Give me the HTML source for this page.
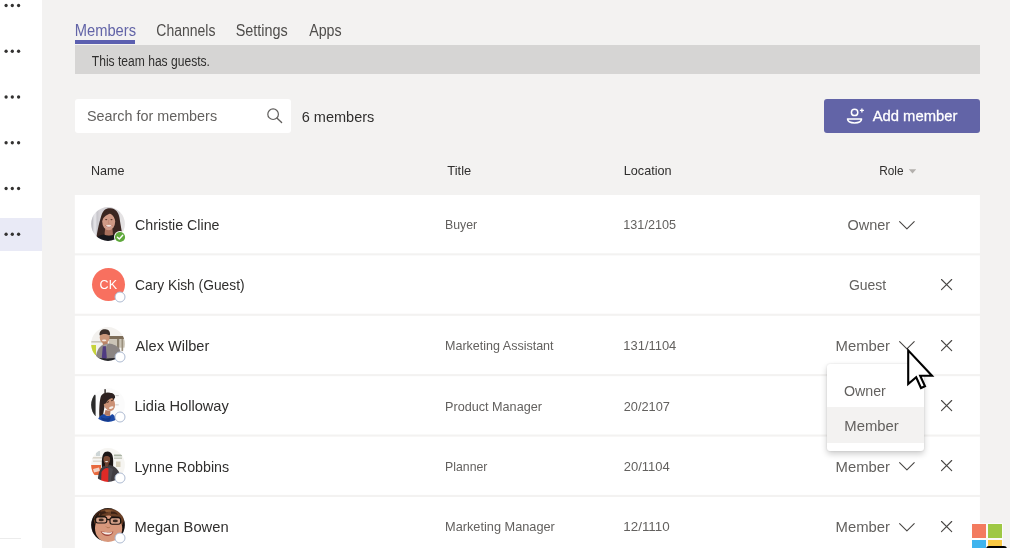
<!DOCTYPE html>
<html><head><meta charset="utf-8"><title>Members</title>
<style>
html,body{margin:0;padding:0}
body{width:1010px;height:548px;overflow:hidden;background:#f3f2f1;position:relative;font-family:"Liberation Sans",sans-serif}
#w{position:absolute;left:0;top:0;width:1010px;height:548px;opacity:.999}
.b{position:absolute}
.t{position:absolute;left:0;top:0;white-space:pre;line-height:1;transform-origin:0 0;display:block;filter:blur(.3px)}
svg{position:absolute;overflow:visible}
</style></head><body><div id="w">
<div class="b" style="left:0.00px;top:0.00px;width:41.60px;height:548.00px;background:#ffffff;"></div>
<div class="b" style="left:0.00px;top:218.00px;width:41.60px;height:32.80px;background:#e9eaf6;"></div>
<div class="b" style="left:0.00px;top:538.00px;width:20.70px;height:1.00px;background:#ececec;"></div>
<svg style="left:0;top:0" width="42" height="548" viewBox="0 0 42 548" fill="#333231"><circle cx="6.1" cy="5.50" r="1.65"/><circle cx="12.3" cy="5.50" r="1.65"/><circle cx="18.6" cy="5.50" r="1.65"/><circle cx="6.1" cy="51.25" r="1.65"/><circle cx="12.3" cy="51.25" r="1.65"/><circle cx="18.6" cy="51.25" r="1.65"/><circle cx="6.1" cy="97.00" r="1.65"/><circle cx="12.3" cy="97.00" r="1.65"/><circle cx="18.6" cy="97.00" r="1.65"/><circle cx="6.1" cy="142.75" r="1.65"/><circle cx="12.3" cy="142.75" r="1.65"/><circle cx="18.6" cy="142.75" r="1.65"/><circle cx="6.1" cy="188.50" r="1.65"/><circle cx="12.3" cy="188.50" r="1.65"/><circle cx="18.6" cy="188.50" r="1.65"/><circle cx="6.1" cy="234.25" r="1.65"/><circle cx="12.3" cy="234.25" r="1.65"/><circle cx="18.6" cy="234.25" r="1.65"/></svg>
<div class="b" style="left:75.20px;top:40.30px;width:60.30px;height:3.40px;background:#5b5fb0;"></div>
<div class="b" style="left:75.00px;top:44.80px;width:905.00px;height:29.30px;background:#d6d5d4;"></div>
<div class="b" style="left:75.20px;top:99.30px;width:215.90px;height:33.30px;background:#ffffff;border-radius:3px"></div>
<div class="b" style="left:824.40px;top:99.10px;width:155.40px;height:33.70px;background:#6264a7;border-radius:3px"></div>
<svg style="left:0;top:0" width="1010" height="548" viewBox="0 0 1010 548" fill="#fff"><rect x="74.8" y="195.00" width="905.1" height="58.3"/><rect x="74.8" y="255.40" width="905.1" height="58.3"/><rect x="74.8" y="315.80" width="905.1" height="58.3"/><rect x="74.8" y="376.20" width="905.1" height="58.3"/><rect x="74.8" y="436.60" width="905.1" height="58.3"/><rect x="74.8" y="497.00" width="905.1" height="58.3"/></svg>
<svg style="left:91.2px;top:206.80px" width="34" height="34" viewBox="0 0 34 34">
<defs><clipPath id="c0"><circle cx="17" cy="17" r="16.9"/></clipPath><filter id="f0" x="-10%" y="-10%" width="120%" height="120%"><feGaussianBlur stdDeviation="0.55"/></filter></defs>
<g clip-path="url(#c0)"><g filter="url(#f0)">
<rect x="-2" y="-2" width="38" height="38" fill="#d4d2d6"/>
<rect x="-2" y="-2" width="4.5" height="38" fill="#c2c1c7"/>
<rect x="2.5" y="-2" width="3" height="38" fill="#e2e1e5"/>
<rect x="5.5" y="-2" width="2" height="38" fill="#c9c8cd"/>
<rect x="29" y="-2" width="8" height="38" fill="#e4e2e3"/>
<path d="M5 36 C5.5 27 8 16 10.5 8 C12.5 2 16 1 19.5 1.2 C24.5 1.5 27.5 5 28.5 11 C29.5 18 31 24 31.5 30 L31.5 36 Z" fill="#3a2620"/>
<path d="M14 22 L21.5 22 L22 28.5 L13.5 28.5 Z" fill="#a86f5d"/>
<ellipse cx="17.7" cy="14.6" rx="6.5" ry="8.6" fill="#d09a86"/>
<path d="M11 13.5 C11 7 14 4.6 17.5 4.6 C21.5 4.6 24.5 7.5 24.5 13.8 C23.6 10.6 22 8 19 6.6 C16.5 7.6 12.8 9.6 11 13.5 Z" fill="#3a2620"/>
<ellipse cx="17.8" cy="19.2" rx="3" ry="1.25" fill="#f4ebe6"/>
<path d="M14.4 18.4 C16 20.8 19.6 20.8 21.2 18.4" stroke="#a6584d" stroke-width="0.7" fill="none"/>
<ellipse cx="15.2" cy="12.6" rx="1.1" ry="0.6" fill="#5a382e"/><ellipse cx="20.5" cy="12.6" rx="1.1" ry="0.6" fill="#5a382e"/>
<path d="M17.6 13 L17.2 16.4 L18.6 16.4" stroke="#b9806d" stroke-width="0.6" fill="none"/>
<path d="M3 36 C4 30 8 28.2 13 27.6 C16 29.4 20 29.4 23 27.6 C28 28.2 31 30.5 32 36 Z" fill="#18141a"/>
</g></g></svg>
<svg style="left:112.90px;top:229.50px" width="14" height="14" viewBox="0 0 14 14"><circle cx="7" cy="7" r="6.0" fill="#fff"/><circle cx="7" cy="7" r="5.1" fill="#5fa93c"/><path d="M4.4 7.2 L6.3 9 L9.7 5.3" fill="none" stroke="#fff" stroke-width="1.4" stroke-linecap="round" stroke-linejoin="round"/></svg>
<div class="b" style="left:91.7px;top:267.68px;width:33.4px;height:33.4px;border-radius:50%;background:#f8705f"></div>
<svg style="left:112.90px;top:289.78px" width="14" height="14" viewBox="0 0 14 14"><circle cx="7" cy="7" r="5.0" fill="#fff" stroke="#aebbd2" stroke-width="1.0"/></svg>
<svg style="left:91.2px;top:327.36px" width="34" height="34" viewBox="0 0 34 34">
<defs><clipPath id="c2"><circle cx="17" cy="17" r="16.9"/></clipPath><filter id="f2" x="-10%" y="-10%" width="120%" height="120%"><feGaussianBlur stdDeviation="0.55"/></filter></defs>
<g clip-path="url(#c2)"><g filter="url(#f2)">
<rect x="-2" y="-2" width="38" height="38" fill="#f3f1ee"/>
<rect x="18" y="9" width="16" height="3.2" fill="#7d6d58"/>
<rect x="18" y="12.2" width="16" height="8.5" fill="#cbc4b6"/>
<rect x="26" y="12" width="2.2" height="12" fill="#8a7f6d"/>
<rect x="30.5" y="12" width="1.6" height="12" fill="#9a8f7d"/>
<rect x="-1" y="14" width="12" height="1.6" fill="#c9c4b8"/>
<path d="M-1 18 H5 V28 H-1 Z" fill="#c6d23a"/>
<path d="M8.6 8 C8 3.5 11.5 1.8 14.5 2.2 C17.8 2.5 19.6 4.6 19 8.5 C17.5 6.5 11 6 8.6 8 Z" fill="#3a2e29"/>
<ellipse cx="13.6" cy="10.4" rx="4.9" ry="6.2" fill="#c99679"/>
<path d="M8.7 8.6 C9 4.5 12 3.6 14.3 3.8 C17 4 18.8 5.6 18.6 8.8 C16.5 6.6 11.5 6.3 8.7 8.6 Z" fill="#3a2e29"/>
<ellipse cx="13.2" cy="13.3" rx="2.2" ry="0.9" fill="#f3e8e0"/>
<path d="M11.5 15 L16.5 15 L17 19 L12 19.5 Z" fill="#b98468"/>
<path d="M4.5 36 C4.5 28 6 22 10.5 18.5 L13.5 17.5 L18 16.5 C22 16.8 27 19 29 23 C30 27 30 32 30 36 Z" fill="#8b8583"/>
<path d="M12 18 L16.8 17 L14.5 21 Z" fill="#a7a2a0"/>
<path d="M11.8 19.6 L14.8 19 L15.8 31 L12.6 33 L10.8 30.5 Z" fill="#4f3b82"/>
<path d="M4 30 C8 31.5 20 32.5 31 29.5 L31 36 L4 36 Z" fill="#26252b"/>
</g></g></svg>
<svg style="left:112.90px;top:350.06px" width="14" height="14" viewBox="0 0 14 14"><circle cx="7" cy="7" r="5.0" fill="#fff" stroke="#aebbd2" stroke-width="1.0"/></svg>
<svg style="left:91.2px;top:387.64px" width="34" height="34" viewBox="0 0 34 34">
<defs><clipPath id="c3"><circle cx="17" cy="17" r="16.9"/></clipPath><filter id="f3" x="-10%" y="-10%" width="120%" height="120%"><feGaussianBlur stdDeviation="0.55"/></filter></defs>
<g clip-path="url(#c3)"><g filter="url(#f3)">
<rect x="-2" y="-2" width="38" height="38" fill="#fbfbfb"/>
<path d="M0 6 C2 6 4.6 6 4.6 8 L4.6 28 C3 28 0 27 0 27 Z" fill="#2a2b2c"/>
<rect x="13.4" y="1.2" width="1.4" height="4" fill="#2b2522"/>
<path d="M8.4 29 C8 22 8.5 12 10 8 C12 4.5 17.5 3.8 21 5.5 C23.5 7 24 10 23 12 L14 16 C13 21 12.5 25 11.5 29.5 Z" fill="#2e2420"/>
<path d="M14.5 22 L19.5 23 L19 28 L13 27.5 Z" fill="#b87c62"/>
<ellipse cx="18.3" cy="15.6" rx="5.6" ry="7.5" transform="rotate(-18 18.3 15.6)" fill="#cb9175"/>
<path d="M11.8 16.5 C11 9 15 4.6 20 5 C23 5.4 24.6 7.6 24 10.2 C21 9.4 17 10.8 14.6 15.4 Z" fill="#2e2420"/><path d="M15.6 14.6 L18 13.6 M20.2 12.8 L22.4 11.8" stroke="#3a2720" stroke-width="0.9"/>
<ellipse cx="20.3" cy="19.6" rx="2.3" ry="1.1" transform="rotate(-20 20.3 19.6)" fill="#f5ede8"/>
<rect x="24.5" y="7.2" width="3.2" height="0.9" fill="#c9c7c5"/><rect x="24.5" y="16.4" width="3.2" height="0.9" fill="#c9c7c5"/>
<path d="M6 36 C6.5 30 9 27 13 26 C15 28.5 19 29 21 26 C24 27 25 30 25.5 36 Z" fill="#1f4aa5"/>
<path d="M10 29 C13 31 17 31 20 28.5 L19 33 L11 33.5 Z" fill="#163b8c"/>
</g></g></svg>
<svg style="left:112.90px;top:410.34px" width="14" height="14" viewBox="0 0 14 14"><circle cx="7" cy="7" r="5.0" fill="#fff" stroke="#aebbd2" stroke-width="1.0"/></svg>
<svg style="left:91.2px;top:447.92px" width="34" height="34" viewBox="0 0 34 34">
<defs><clipPath id="c4"><circle cx="17" cy="17" r="16.9"/></clipPath><filter id="f4" x="-10%" y="-10%" width="120%" height="120%"><feGaussianBlur stdDeviation="0.55"/></filter></defs>
<g clip-path="url(#c4)"><g filter="url(#f4)">
<rect x="-2" y="-2" width="38" height="38" fill="#f6f5f2"/>
<rect x="1" y="9" width="10" height="1.6" fill="#d9d5ca"/><rect x="2" y="12.5" width="9" height="1.4" fill="#dedad0"/>
<rect x="5" y="3" width="4" height="5" fill="#cdd5d6"/>
<rect x="23" y="6.5" width="8" height="1.8" fill="#a9b3a3"/><rect x="23" y="9.5" width="8" height="1.3" fill="#bcc3b5"/>
<rect x="25" y="13.5" width="4.5" height="5.5" fill="#d8d1be"/>
<path d="M-1 17 H10 V27 H-1 Z" fill="#e8693c"/>
<path d="M2 21 L8 19.5 L9 23 L3 24.5 Z" fill="#f3d2c4"/>
<path d="M11 20 C10.5 12 11 6 14 4 C17 2.5 20.5 4 21.5 7.5 C22.5 11 22.2 16 22 20 Z" fill="#1d1716"/>
<ellipse cx="15.8" cy="11.2" rx="3.3" ry="4.7" fill="#7b4b36"/>
<path d="M12.4 9.5 C12.6 6 15 4.8 17 5.2 C19 5.6 19.6 7.5 19.4 9.6 C17.5 7.6 14.5 7.4 12.4 9.5 Z" fill="#1d1716"/>
<ellipse cx="15.6" cy="13.6" rx="1.6" ry="0.7" fill="#eadfd8"/>
<rect x="14" y="15" width="3.6" height="4" fill="#6e4331"/>
<path d="M6.5 36 C7 27 8 21 13 17.5 L15.5 19.5 L18.5 17 C24 18 28 22 29 27 L29.5 36 Z" fill="#3f3d42"/>
<path d="M10 36 L10.5 24 C12 21.5 13.5 20.5 15.5 20 L18.5 20.5 L18 36 Z" fill="#df2a25"/>
<path d="M17.5 19 L22 21 L19 36 L17.2 36 Z" fill="#4d4b51"/>
</g></g></svg>
<svg style="left:112.90px;top:470.62px" width="14" height="14" viewBox="0 0 14 14"><circle cx="7" cy="7" r="5.0" fill="#fff" stroke="#aebbd2" stroke-width="1.0"/></svg>
<svg style="left:91.2px;top:508.20px" width="34" height="34" viewBox="0 0 34 34">
<defs><clipPath id="c5"><circle cx="17" cy="17" r="16.9"/></clipPath><filter id="f5" x="-10%" y="-10%" width="120%" height="120%"><feGaussianBlur stdDeviation="0.55"/></filter></defs>
<g clip-path="url(#c5)"><g filter="url(#f5)">
<rect x="-2" y="-2" width="38" height="38" fill="#15100e"/>
<ellipse cx="17.8" cy="12" rx="15" ry="11.5" fill="#5a3520"/>
<ellipse cx="17.6" cy="20.5" rx="13.6" ry="14.2" fill="#d8987c"/>
<path d="M3 14 C3 5 10 1 18 1.2 C26 1.4 32 5 32.5 14 C29 10.5 26 8.5 22 9.5 C19 6.5 14 7.5 12 9.5 C8 9 5 11 3 14 Z" fill="#6b3f25"/>
<path d="M9 4 C12 2.5 15 3 17 5 C14 5 11 6 9 8 Z" fill="#3b2216"/><path d="M3 12 C4 7 7 4 10 3 C8 6 6 9 5.5 13 Z" fill="#2a170f"/><path d="M14 2 C17 1.5 21 2 23 3.5 C20 3.5 17 3.8 15 4.6 Z" fill="#8b5a36"/><path d="M20 3.5 C23 3 26 4.5 27 7 C25 6 22 5.5 20 6 Z" fill="#3b2216"/>
<rect x="4.6" y="8.8" width="11.2" height="6.2" rx="2.2" fill="#d3a088" stroke="#1a1210" stroke-width="1.15"/>
<rect x="19" y="9.6" width="10.6" height="6.6" rx="2.2" fill="#d3a088" stroke="#1a1210" stroke-width="1.15"/>
<path d="M15.8 11.4 L19 11.8" stroke="#1a1210" stroke-width="1.4"/>
<ellipse cx="10.2" cy="11.9" rx="2.6" ry="1.3" fill="#3d2a20"/><ellipse cx="24.3" cy="12.9" rx="2.6" ry="1.3" fill="#3d2a20"/><path d="M6.5 8.2 L14.5 8.4 M20 9 L28.5 9.4" stroke="#1a1210" stroke-width="1.3"/>
<path d="M15 18.5 C15.8 20 18.2 20.2 19.2 18.8" stroke="#b37855" stroke-width="1" fill="none"/>
<path d="M9.6 23 C12 24.2 19 24.6 22.4 23.4 C21.5 27 18 28.2 15.8 28 C13 27.8 10.4 26 9.6 23 Z" fill="#a2493b"/>
<path d="M10.6 23.6 C13 24.6 18.5 24.9 21.4 23.9 C20.8 25.8 18.6 26.6 16 26.5 C13.4 26.4 11.4 25.4 10.6 23.6 Z" fill="#f7efe9"/>
<path d="M0 14 C1.5 22 3 28 7 32 L0 36 Z" fill="#15100e"/><path d="M34 13 C33 22 31.5 27 28 31.5 L34 36 Z" fill="#15100e"/>
</g></g></svg>
<svg style="left:112.90px;top:530.90px" width="14" height="14" viewBox="0 0 14 14"><circle cx="7" cy="7" r="5.0" fill="#fff" stroke="#aebbd2" stroke-width="1.0"/></svg>
<svg style="left:266px;top:107px" width="18" height="18" viewBox="0 0 18 18"><circle cx="7.1" cy="7.2" r="5.3" fill="none" stroke="#605e5c" stroke-width="1.2"/><path d="M10.9 11.1 L15.6 15.6" stroke="#605e5c" stroke-width="1.35" stroke-linecap="round"/></svg>
<svg style="left:845px;top:106px" width="22" height="20" viewBox="0 0 22 20"><circle cx="9.6" cy="6.4" r="3.2" fill="none" stroke="#fff" stroke-width="1.5"/><path d="M2.5 12.9 H16.6 C16.4 15.6 13.6 16.9 9.55 16.9 C5.5 16.9 2.7 15.6 2.5 12.9 Z" fill="none" stroke="#fff" stroke-width="1.5" stroke-linejoin="round"/><path d="M16.9 2.4 V6.4 M14.9 4.4 H18.9" stroke="#fff" stroke-width="1.3"/></svg>
<svg style="left:908px;top:168px" width="10" height="8" viewBox="0 0 10 8"><path d="M0.8 1.2 H8.2 L4.5 5.4 Z" fill="#b3b0ad"/></svg>
<svg style="left:899.2px;top:220.60px" width="17" height="10" viewBox="0 0 17 10"><path d="M0.6 0.6 L7.9 7.9 L15.2 0.6" fill="none" stroke="#484644" stroke-width="1.1" stroke-linecap="round" stroke-linejoin="round"/></svg>
<svg style="left:941px;top:279.20px" width="12" height="12" viewBox="0 0 12 12"><path d="M0.5 0.5 L10.7 10.7 M10.7 0.5 L0.5 10.7" fill="none" stroke="#484644" stroke-width="1.1" stroke-linecap="round"/></svg>
<svg style="left:899.2px;top:341.40px" width="17" height="10" viewBox="0 0 17 10"><path d="M0.6 0.6 L7.9 7.9 L15.2 0.6" fill="none" stroke="#484644" stroke-width="1.1" stroke-linecap="round" stroke-linejoin="round"/></svg>
<svg style="left:941px;top:339.60px" width="12" height="12" viewBox="0 0 12 12"><path d="M0.5 0.5 L10.7 10.7 M10.7 0.5 L0.5 10.7" fill="none" stroke="#484644" stroke-width="1.1" stroke-linecap="round"/></svg>
<svg style="left:941px;top:400.00px" width="12" height="12" viewBox="0 0 12 12"><path d="M0.5 0.5 L10.7 10.7 M10.7 0.5 L0.5 10.7" fill="none" stroke="#484644" stroke-width="1.1" stroke-linecap="round"/></svg>
<svg style="left:899.2px;top:462.20px" width="17" height="10" viewBox="0 0 17 10"><path d="M0.6 0.6 L7.9 7.9 L15.2 0.6" fill="none" stroke="#484644" stroke-width="1.1" stroke-linecap="round" stroke-linejoin="round"/></svg>
<svg style="left:941px;top:460.40px" width="12" height="12" viewBox="0 0 12 12"><path d="M0.5 0.5 L10.7 10.7 M10.7 0.5 L0.5 10.7" fill="none" stroke="#484644" stroke-width="1.1" stroke-linecap="round"/></svg>
<svg style="left:899.2px;top:522.60px" width="17" height="10" viewBox="0 0 17 10"><path d="M0.6 0.6 L7.9 7.9 L15.2 0.6" fill="none" stroke="#484644" stroke-width="1.1" stroke-linecap="round" stroke-linejoin="round"/></svg>
<svg style="left:941px;top:520.80px" width="12" height="12" viewBox="0 0 12 12"><path d="M0.5 0.5 L10.7 10.7 M10.7 0.5 L0.5 10.7" fill="none" stroke="#484644" stroke-width="1.1" stroke-linecap="round"/></svg>
<span class="t" style="font-size:16px;color:#6264a7;transform:translate(74.75px,23.06px) scaleX(0.9187)">Members</span>
<span class="t" style="font-size:16px;color:#4f4d4b;transform:translate(156.34px,23.06px) scaleX(0.8740)">Channels</span>
<span class="t" style="font-size:16px;color:#4f4d4b;transform:translate(235.72px,23.06px) scaleX(0.9009)">Settings</span>
<span class="t" style="font-size:16px;color:#4f4d4b;transform:translate(309.20px,23.06px) scaleX(0.8892)">Apps</span>
<span class="t" style="font-size:14px;color:#302f2e;transform:translate(91.78px,54.05px) scaleX(0.8628)">This team has guests.</span>
<span class="t" style="font-size:15px;color:#63615f;transform:translate(86.88px,108.30px) scaleX(0.9582)">Search for members</span>
<span class="t" style="font-size:15px;color:#302f2e;transform:translate(301.67px,108.80px) scaleX(0.9681)">6 members</span>
<span class="t" style="font-size:15.5px;color:#ffffff;transform:translate(872.70px,108.18px) scaleX(0.9537);-webkit-text-stroke:0.3px #ffffff">Add member</span>
<span class="t" style="font-size:13px;color:#302f2e;transform:translate(91.03px,163.80px) scaleX(0.9660)">Name</span>
<span class="t" style="font-size:13px;color:#302f2e;transform:translate(447.35px,163.80px) scaleX(0.9892)">Title</span>
<span class="t" style="font-size:13px;color:#302f2e;transform:translate(623.73px,163.80px) scaleX(0.9735)">Location</span>
<span class="t" style="font-size:13px;color:#302f2e;transform:translate(879.19px,163.80px) scaleX(0.9114)">Role</span>
<span class="t" style="font-size:15px;color:#302f2e;transform:translate(134.99px,216.90px) scaleX(0.9470)">Christie Cline</span>
<span class="t" style="font-size:13px;color:#63615f;transform:translate(445.05px,218.30px) scaleX(0.9466)">Buyer</span>
<span class="t" style="font-size:13px;color:#63615f;transform:translate(623.33px,218.30px) scaleX(0.9706)">131/2105</span>
<span class="t" style="font-size:15px;color:#63615f;transform:translate(847.48px,216.90px) scaleX(0.9665)">Owner</span>
<span class="t" style="font-size:15px;color:#302f2e;transform:translate(135.01px,277.30px) scaleX(0.9191)">Cary Kish (Guest)</span>
<span class="t" style="font-size:15px;color:#63615f;transform:translate(848.90px,277.30px) scaleX(0.9329)">Guest</span>
<span class="t" style="font-size:15px;color:#302f2e;transform:translate(135.58px,337.70px) scaleX(0.9722)">Alex Wilber</span>
<span class="t" style="font-size:13px;color:#63615f;transform:translate(445.04px,339.10px) scaleX(0.9628)">Marketing Assistant</span>
<span class="t" style="font-size:13px;color:#63615f;transform:translate(623.31px,339.10px) scaleX(0.9947)">131/1104</span>
<span class="t" style="font-size:15px;color:#63615f;transform:translate(835.56px,337.70px) scaleX(0.9888)">Member</span>
<span class="t" style="font-size:15px;color:#302f2e;transform:translate(134.48px,398.10px) scaleX(0.9751)">Lidia Holloway</span>
<span class="t" style="font-size:13px;color:#63615f;transform:translate(445.03px,399.50px) scaleX(0.9716)">Product Manager</span>
<span class="t" style="font-size:13px;color:#63615f;transform:translate(623.69px,399.50px) scaleX(0.9836)">20/2107</span>
<span class="t" style="font-size:15px;color:#302f2e;transform:translate(134.51px,458.50px) scaleX(0.9514)">Lynne Robbins</span>
<span class="t" style="font-size:13px;color:#63615f;transform:translate(445.06px,459.90px) scaleX(0.9444)">Planner</span>
<span class="t" style="font-size:13px;color:#63615f;transform:translate(623.67px,459.90px) scaleX(1.0000)">20/1104</span>
<span class="t" style="font-size:15px;color:#63615f;transform:translate(835.56px,458.50px) scaleX(0.9888)">Member</span>
<span class="t" style="font-size:15px;color:#302f2e;transform:translate(134.47px,518.90px) scaleX(0.9813)">Megan Bowen</span>
<span class="t" style="font-size:13px;color:#63615f;transform:translate(445.02px,520.30px) scaleX(0.9806)">Marketing Manager</span>
<span class="t" style="font-size:13px;color:#63615f;transform:translate(623.27px,520.30px) scaleX(1.0315)">12/1110</span>
<span class="t" style="font-size:15px;color:#63615f;transform:translate(835.56px,518.90px) scaleX(0.9888)">Member</span>
<span class="t" style="font-size:12.5px;color:#ffffff;transform:translate(99.57px,278.62px) scaleX(1.0061)">CK</span>
<div class="b" style="left:827.4px;top:364.4px;width:96.8px;height:86.6px;background:#fff;border-radius:3px;box-shadow:0 3px 6px rgba(0,0,0,.20),0 0 2px rgba(0,0,0,.12)"></div>
<div class="b" style="left:827.4px;top:407.4px;width:96.8px;height:35.4px;background:#f3f2f1"></div>

<span class="t" style="font-size:15px;color:#63615f;transform:translate(843.89px,382.50px) scaleX(0.9480)">Owner</span>
<span class="t" style="font-size:15px;color:#63615f;transform:translate(844.26px,417.60px) scaleX(0.9907)">Member</span>
<svg style="left:900.6px;top:342.6px" width="40" height="52" viewBox="0 0 40 52"><path d="M7.2 7.4 L7.2 41 L15.2 34.2 L20 45 L24 43.2 L19.2 32.8 L31 32.8 Z" fill="#fff" stroke="#000" stroke-width="2.1" stroke-linejoin="miter"/></svg>
<div class="b" style="left:971px;top:523px;width:32px;height:26px;background:#fff;opacity:.6"></div>
<div class="b" style="left:972px;top:524.1px;width:14.2px;height:13.8px;background:#f37b5f"></div>
<div class="b" style="left:987.9px;top:524.1px;width:14.1px;height:13.8px;background:#9ec844"></div>
<div class="b" style="left:972px;top:539.8px;width:14.2px;height:9px;background:#3fb4ee"></div>
<div class="b" style="left:987.9px;top:539.8px;width:14.1px;height:9px;background:#f9c843"></div>
<div class="b" style="left:986px;top:546px;width:20.7px;height:6px;background:#000;border-radius:3px"></div>
</div></body></html>
